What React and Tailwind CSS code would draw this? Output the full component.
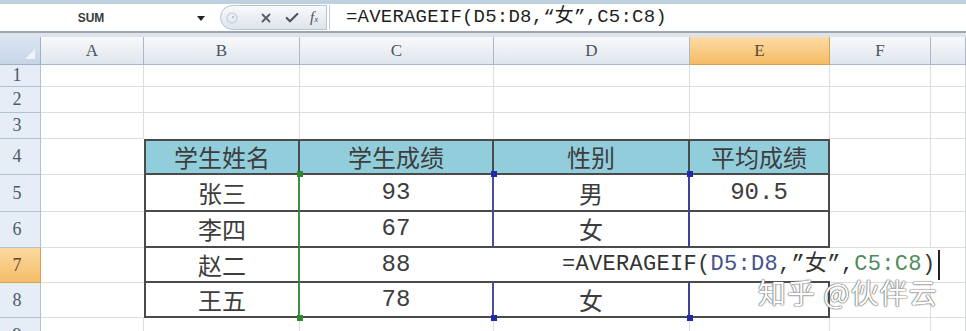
import React from 'react';
import { X, Check } from 'lucide-react';

const COLS = ['A', 'B', 'C', 'D', 'E', 'F', 'G'];
const ROWS = [1, 2, 3, 4, 5, 6, 7, 8, 9];

const TABLE = {
  4: ['学生姓名', '学生成绩', '性别', '平均成绩'],
  5: ['张三', '93', '男', '90.5'],
  6: ['李四', '67', '女', ''],
  7: ['赵二', '88', '', ''],
  8: ['王五', '78', '女', ''],
};

const cjk = "font-['Noto_Sans_CJK_SC',sans-serif]";
const mono = "font-['Liberation_Mono','Noto_Sans_CJK_SC',monospace]";

// every class string written out so tailwind picks it up
const cellClass = (r, c) => {
  const inTable = c >= 1 && c <= 4;
  if (r === 4 && inTable) {
    return c === 1
      ? 'border-2 border-[#4a4a4a] bg-[#92cddc]'
      : 'border-t-2 border-r-2 border-b-2 border-[#4a4a4a] bg-[#92cddc]';
  }
  if (r >= 5 && r <= 8 && inTable) {
    if (c === 1) return 'border-l-2 border-r-2 border-b-2 border-[#4a4a4a] border-r-[#3f8f3f] bg-white';
    if (c === 2) return 'border-r-2 border-b-2 border-[#4a4a4a] border-r-[#4b509b] bg-white';
    if (c === 3) return 'border-r-2 border-b-2 border-[#4a4a4a] border-r-[#3d4399] bg-white';
    return 'border-r-2 border-b-2 border-[#4a4a4a] bg-white';
  }
  if (r === 3 && inTable) return 'border-r border-[#dadde2] bg-white';
  if (r >= 4 && r <= 8 && c === 0) return 'border-b border-[#dadde2] bg-white';
  return 'border-r border-b border-[#dadde2] bg-white';
};

const Dot = ({ className }) => (
  <span className={`absolute z-20 h-[6px] w-[6px] ${className}`} />
);

const FormulaBar = () => (
  <div>
    <div className="h-[4px] bg-[#bfd0df]" />
    <div className="flex h-[27px] items-center bg-white">
      <div className="flex w-[182px] justify-center font-['Liberation_Sans',sans-serif] text-[12px] font-bold text-[#3a3a3a]">
        SUM
      </div>
      <div className="flex w-[38px] justify-center">
        <span className="mt-[1px] h-0 w-0 border-x-[4px] border-t-[5px] border-x-transparent border-t-[#222]" />
      </div>
      <div className="flex h-[25px] w-[107px] items-center rounded-l-[13px] border border-[#b8c4d2] bg-gradient-to-b from-[#f8fafc] to-[#dde4ec]">
        <svg width="14" height="14" viewBox="0 0 14 14" className="ml-[4px]">
          <circle cx="7" cy="7" r="5" fill="none" stroke="#cbd3dd" strokeWidth="1.5" />
          <circle cx="8" cy="6" r="1.2" fill="#b9c2cd" />
        </svg>
        <X size={14} strokeWidth={3.2} color="#5b6068" className="ml-[20px]" />
        <Check size={16} strokeWidth={3.2} color="#4f555c" className="ml-[11px]" />
        <span className="ml-[10px] font-['Liberation_Serif',serif] text-[15px] italic text-[#4d535a]">
          f<span className="text-[9px]">x</span>
        </span>
      </div>
      <span className="ml-[2px] h-[25px] w-px bg-[#c6ced8]" />
      <div className={`ml-[16px] ${mono} text-[19px] leading-none tracking-[0.2px] text-[#1f1f1f]`}>
        =AVERAGEIF(D5:D8,“女”,C5:C8)
      </div>
    </div>
    <div className="h-[6px] border-t-2 border-[#9ea7b1] bg-[#dfe4ea]" />
  </div>
);

const Editor = () => (
  <div className={`absolute -left-[2px] top-0 bottom-0 z-10 flex w-[448px] items-center bg-white pl-[70px] ${mono} text-[22px] leading-none tracking-[0.3px] text-[#333]`}>
    <span>=AVERAGEIF(</span>
    <span className="text-[#45508f]">D5:D8</span>
    <span>,”女”,</span>
    <span className="text-[#4f8a5c]">C5:C8</span>
    <span>)</span>
    <span className="ml-[3px] h-[30px] w-[2px] bg-[#222]" />
  </div>
);

const CellText = ({ r, c }) => {
  const row = TABLE[r];
  if (!row || c < 1 || c > 4) return null;
  const v = row[c - 1];
  if (!v) return null;
  const isNum = /^[0-9.]+$/.test(v);
  return (
    <span className={`${isNum ? mono : cjk} text-[24px] leading-none text-[#3d3d3d]`}>
      {v}
    </span>
  );
};

const Sheet = () => (
  <div className="grid grid-cols-[41px_103px_156px_194px_196px_140px_101px_1fr] grid-rows-[28px_22px_26px_26px_36px_37px_36px_35px_35px_35px]">
    {/* corner */}
    <div className="relative border-r border-b border-[#9fb1c6] bg-gradient-to-b from-[#dbe5f1] to-[#c6d5e8]">
      <span className="absolute right-[5px] bottom-[5px] h-0 w-0 [border-bottom:10px_solid_#eef3f9] [border-left:10px_solid_transparent]" />
    </div>
    {COLS.map((col) => (
      <div
        key={col}
        className={
          col === 'E'
            ? "flex items-center justify-center border-r border-b border-[#d9a14e] bg-gradient-to-b from-[#fcdca6] to-[#f5bb63] font-['Liberation_Serif',serif] text-[17px] text-[#5a4a30]"
            : "flex items-center justify-center border-r border-b border-[#a9b8ca] bg-gradient-to-b from-[#f8f9fb] to-[#e0e6ee] font-['Liberation_Serif',serif] text-[17px] text-[#4a5563]"
        }
      >
        {col === 'G' ? '' : col}
      </div>
    ))}

    {ROWS.map((r) => (
      <React.Fragment key={r}>
        <div
          className={
            r === 7
              ? "flex items-center justify-center border-r border-b border-[#d9a14e] bg-gradient-to-b from-[#fbd99f] to-[#f5bd67] pr-[6px] font-['Liberation_Serif',serif] text-[18px] text-[#5e4a2a]"
              : "flex items-center justify-center border-r border-b border-[#b3c1d2] bg-[#e6edf6] pr-[6px] font-['Liberation_Serif',serif] text-[18px] text-[#4e5a6b]"
          }
        >
          {r}
        </div>
        {COLS.map((col, c) => (
          <div key={col} className={`relative flex items-center justify-center ${cellClass(r, c)}`}>
            <CellText r={r} c={c} />
            {r === 5 && c === 2 && <Dot className="-left-[3px] -top-[4px] bg-[#2f8a2f]" />}
            {r === 8 && c === 2 && <Dot className="-left-[3px] -bottom-[5px] bg-[#2f8a2f]" />}
            {r === 5 && c === 3 && <Dot className="-left-[3px] -top-[4px] bg-[#1f2aa8]" />}
            {r === 5 && c === 3 && <Dot className="-right-[5px] -top-[4px] bg-[#1f2aa8]" />}
            {r === 8 && c === 3 && <Dot className="-left-[3px] -bottom-[5px] bg-[#1f2aa8]" />}
            {r === 8 && c === 3 && <Dot className="-right-[5px] -bottom-[5px] bg-[#1f2aa8]" />}
            {r === 7 && c === 3 && <Editor />}
          </div>
        ))}
      </React.Fragment>
    ))}
  </div>
);

export default function App() {
  return (
    <div className="relative h-[331px] w-[966px] overflow-hidden bg-white">
      <FormulaBar />
      <Sheet />
      {/* watermark */}
      <div className="absolute left-[758px] top-[278px] z-30 font-['Noto_Sans_CJK_SC',sans-serif] text-[28px] leading-none tracking-[1px] text-white [text-shadow:0_0_1px_#555,0_0_1px_#555,0_0_2px_#888]">
        知乎 @伙伴云
      </div>
    </div>
  );
}
